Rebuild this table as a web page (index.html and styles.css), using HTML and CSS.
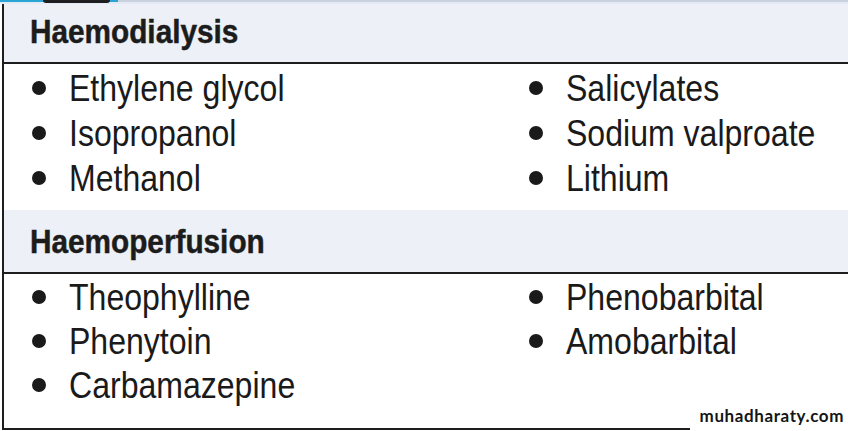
FILE: index.html
```html
<!DOCTYPE html>
<html>
<head>
<meta charset="utf-8">
<link rel="stylesheet" href="styles.css">
</head>
<body>
<div class="table">
  <div class="topstrip"><span class="blue"></span><span class="tab"></span></div>
  <div class="head"><span>Haemodialysis</span></div>
  <div class="body body-first">
    <ul class="col">
      <li><span>Ethylene glycol</span></li>
      <li><span>Isopropanol</span></li>
      <li><span>Methanol</span></li>
    </ul>
    <ul class="col">
      <li><span>Salicylates</span></li>
      <li><span>Sodium valproate</span></li>
      <li><span>Lithium</span></li>
    </ul>
  </div>
  <div class="head"><span>Haemoperfusion</span></div>
  <div class="body body-last">
    <ul class="col">
      <li><span>Theophylline</span></li>
      <li><span>Phenytoin</span></li>
      <li><span>Carbamazepine</span></li>
    </ul>
    <ul class="col">
      <li><span>Phenobarbital</span></li>
      <li><span>Amobarbital</span></li>
    </ul>
  </div>
  <div class="wm">muhadharaty.com</div>
</div>
</body>
</html>
```
FILE: styles.css
```css
html, body {
  margin: 0;
  padding: 0;
  background: #ffffff;
}
.table {
  position: relative;
  margin-left: 2px;
  width: 846px;
  border-left: 2px solid #1e1e1e;
  border-bottom: 2px solid #1e1e1e;
  font-family: "Liberation Sans", Arial, sans-serif;
  color: #1a1a1a;
}
.topstrip {
  position: absolute;
  top: 0;
  left: -4px;
  right: 0;
  height: 2px;
  background: #c9d1de;
  border-bottom: 2px solid #e3eaf5;
}
.topstrip .blue {
  position: absolute;
  left: 0;
  top: 0;
  width: 118px;
  height: 2px;
  background: #2aa6d6;
}
.topstrip .tab {
  position: absolute;
  left: 43px;
  top: 0;
  width: 67px;
  height: 3px;
  background: #1d1d22;
  border-radius: 0 0 6px 6px;
}
.head {
  background: #edf0f7;
  height: 64px;
  box-sizing: border-box;
  padding-left: 26px;
  font-weight: bold;
  font-size: 34px;
  line-height: 62px;
  border-bottom: 2px solid #1e1e1e;
  white-space: nowrap;
  color: #1c1c1c;
}
.head span {
  display: inline-block;
  transform: scaleX(0.875);
  transform-origin: left center;
  -webkit-text-stroke: 0.5px #1c1c1c;
}
.body {
  display: grid;
  grid-template-columns: 497px 1fr;
}
.body-first {
  padding: 2px 0 9px 0;
}
.body-first .col li {
  height: 45px;
}
.body-last {
  padding: 2px 0 20px 0;
}
.body-last .col li {
  height: 44px;
}
.col {
  list-style: none;
  margin: 0;
  padding: 0;
}
.col li {
  display: flex;
  align-items: center;
  font-size: 37px;
  padding-left: 65px;
  position: relative;
  white-space: nowrap;
}
.col li span {
  display: inline-block;
  transform: scaleX(0.866);
  transform-origin: left center;
}
.col li::before {
  content: "";
  position: absolute;
  left: 28px;
  top: 50%;
  width: 14px;
  height: 14px;
  margin-top: -8px;
  border-radius: 50%;
  background: #1a1a1a;
}
.wm {
  position: absolute;
  right: 0;
  bottom: -2px;
  box-sizing: border-box;
  height: 24px;
  padding: 0 6px 4px 10px;
  line-height: 20px;
  background: #ffffff;
  font-family: "Lato", "DejaVu Sans", sans-serif;
  font-weight: bold;
  font-size: 17px;
  letter-spacing: 0.6px;
  color: #151515;
}
```
